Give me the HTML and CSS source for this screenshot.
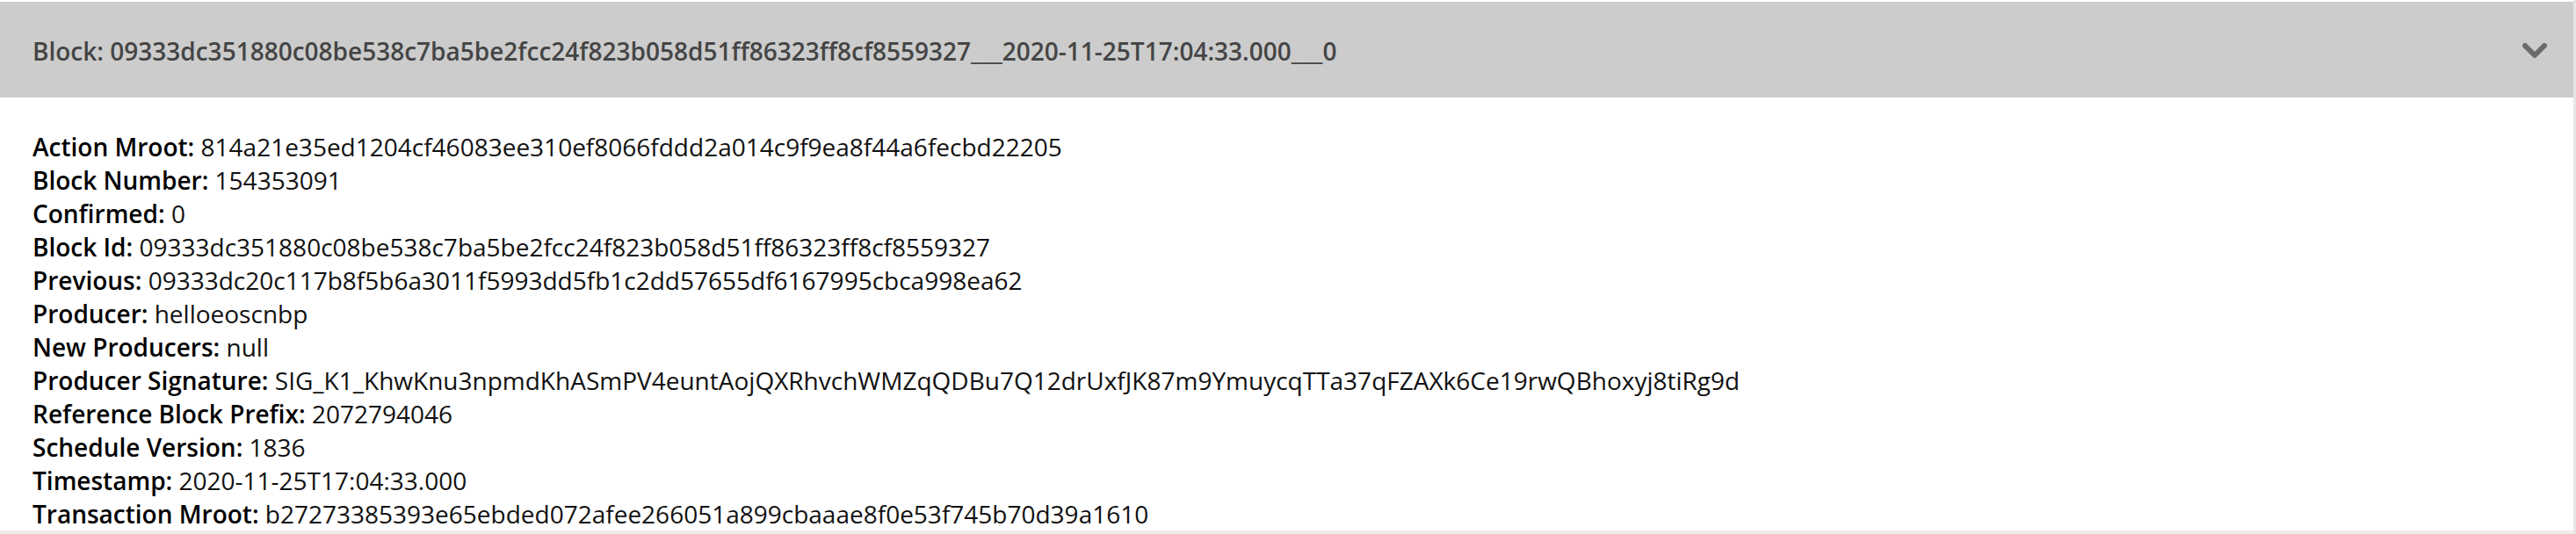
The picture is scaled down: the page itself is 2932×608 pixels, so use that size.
FILE: index.html
```html
<!DOCTYPE html>
<html>
<head>
<meta charset="utf-8">
<link rel="stylesheet" href="styles.css">
</head>
<body>
<div class="page">
  <div class="accordion">
    <div class="acc-header">
      <span class="acc-title">Block: 09333dc351880c08be538c7ba5be2fcc24f823b058d51ff86323ff8cf8559327___2020-11-25T17:04:33.000___0</span>
      <svg class="chevron" width="28" height="18" viewBox="0 0 28 18"><path d="M3 3 L14 14 L25 3" fill="none" stroke="#6b6b6b" stroke-width="6" stroke-linecap="round" stroke-linejoin="round"/></svg>
    </div>
    <div class="acc-body">
      <div class="row"><b>Action Mroot:</b> 814a21e35ed1204cf46083ee310ef8066fddd2a014c9f9ea8f44a6fecbd22205</div>
      <div class="row"><b>Block Number:</b> 154353091</div>
      <div class="row"><b>Confirmed:</b> 0</div>
      <div class="row"><b>Block Id:</b> 09333dc351880c08be538c7ba5be2fcc24f823b058d51ff86323ff8cf8559327</div>
      <div class="row"><b>Previous:</b> 09333dc20c117b8f5b6a3011f5993dd5fb1c2dd57655df6167995cbca998ea62</div>
      <div class="row"><b>Producer:</b> helloeoscnbp</div>
      <div class="row"><b>New Producers:</b> null</div>
      <div class="row"><b>Producer Signature:</b> SIG_K1_KhwKnu3npmdKhASmPV4euntAojQXRhvchWMZqQDBu7Q12drUxfJK87m9YmuycqTTa37qFZAXk6Ce19rwQBhoxyj8tiRg9d</div>
      <div class="row"><b>Reference Block Prefix:</b> 2072794046</div>
      <div class="row"><b>Schedule Version:</b> 1836</div>
      <div class="row"><b>Timestamp:</b> 2020-11-25T17:04:33.000</div>
      <div class="row"><b>Transaction Mroot:</b> b27273385393e65ebded072afee266051a899cbaaae8f0e53f745b70d39a1610</div>
    </div>
  </div>
  <div class="next-item"></div>
</div>
</body>
</html>
```

FILE: styles.css
```css
html, body {
  margin: 0;
  padding: 0;
  background: #ffffff;
}
body {
  font-family: "Open Sans", "Liberation Sans", sans-serif;
  overflow: hidden;
}
.page {
  width: 2929px;
  padding-top: 2px;
  border-right: 3px solid #e6e6e6;
  height: 606px;
  display: flex;
  flex-direction: column;
}
.accordion {
  display: flex;
  flex-direction: column;
}
.acc-header {
  height: 109px;
  background: #cccccc;
  display: flex;
  align-items: center;
  justify-content: space-between;
  padding: 0 30px 0 37px;
}
.acc-title {
  font-size: 28px;
  font-weight: 600;
  color: #454545;
  line-height: 1;
  margin-top: 2px;
}
.chevron {
  display: block;
  margin-top: 2px;
}
.acc-body {
  padding: 37px 0 0 37px;
  height: 456px;
  overflow: hidden;
}
.row {
  font-size: 28px;
  line-height: 38px;
  color: #111111;
  white-space: nowrap;
}
.row b {
  font-weight: 600;
  color: #000000;
}
.next-item {
  flex: 1;
  background: #eeeeee;
}
```
